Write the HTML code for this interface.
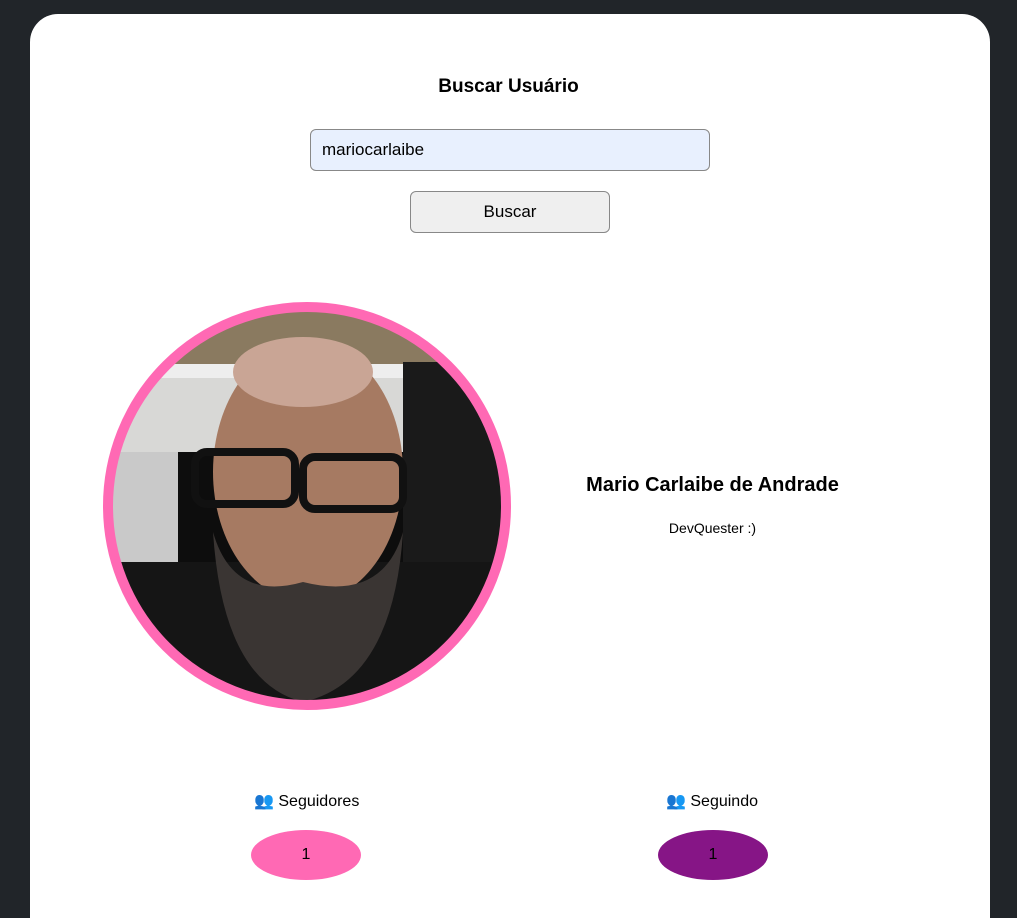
<!DOCTYPE html>
<html><head><meta charset="utf-8"><style>
html,body{margin:0;width:1017px;height:918px;overflow:hidden}
body{background:#212529;font-family:"Liberation Sans",sans-serif;position:relative}
.card{position:absolute;left:30px;top:14px;width:960px;height:904px;background:#fff;border-radius:28px 28px 0 0}
.t{position:absolute;left:0;width:1017px;text-align:center}
h1{position:absolute;top:76px;left:0;width:1017px;text-align:center;margin:0;font-size:19px;font-weight:bold}
.in{position:absolute;left:310px;top:129px;width:400px;height:42px;border:1px solid #888;border-radius:6px;background:#e8f0fe;box-sizing:border-box;padding-left:11px;line-height:40px;font-size:17px}
.btn{position:absolute;left:410px;top:191px;width:200px;height:42px;border:1px solid #888;border-radius:6px;background:#efefef;box-sizing:border-box;text-align:center;line-height:40px;font-size:17px}
.lbl{position:absolute;top:791px;font-size:16px}
.pill{position:absolute;top:830px;width:110px;height:50px;border-radius:50%;text-align:center;line-height:50px;font-size:16px}
</style></head><body>
<div class="card"></div>
<h1>Buscar Usuário</h1>
<div class="in">mariocarlaibe</div>
<div class="btn">Buscar</div>
<svg style="position:absolute;left:103px;top:302px" width="408" height="408" viewBox="0 0 408 408">
<defs><clipPath id="c"><circle cx="204" cy="204" r="196"/></clipPath></defs>
<g clip-path="url(#c)">
<rect width="408" height="408" fill="#d8d8d6"/>
<rect y="0" width="408" height="70" fill="#8a7a60"/>
<rect y="62" width="408" height="14" fill="#eee"/>
<rect x="0" y="150" width="120" height="150" fill="#c9c9c9"/>
<rect x="75" y="150" width="330" height="160" fill="#0d0d0d"/>
<rect x="300" y="60" width="108" height="200" fill="#1a1a1a"/>
<rect x="0" y="260" width="408" height="148" fill="#151515"/>
<ellipse cx="205" cy="170" rx="95" ry="130" fill="#a67a62"/>
<ellipse cx="200" cy="70" rx="70" ry="35" fill="#c9a595"/>
<path d="M110 230 Q120 380 200 400 Q290 380 300 230 Q280 300 200 280 Q130 300 110 230Z" fill="#3a3533"/>
<rect x="92" y="150" width="100" height="52" rx="12" fill="none" stroke="#111" stroke-width="8"/>
<rect x="200" y="155" width="100" height="52" rx="12" fill="none" stroke="#111" stroke-width="8"/>
</g>
<circle cx="204" cy="204" r="199" fill="none" stroke="#ff69b4" stroke-width="10"/>
</svg>
<div class="t" style="left:204px;top:474px;font-weight:bold;font-size:20px">Mario Carlaibe de Andrade</div>
<div class="t" style="left:204px;top:520px;font-size:14px">DevQuester :)</div>
<div class="lbl" style="left:254px">👥 Seguidores</div>
<div class="lbl" style="left:666px">👥 Seguindo</div>
<div class="pill" style="left:251px;background:#ff69b4">1</div>
<div class="pill" style="left:658px;background:#861586">1</div>
</body></html>
